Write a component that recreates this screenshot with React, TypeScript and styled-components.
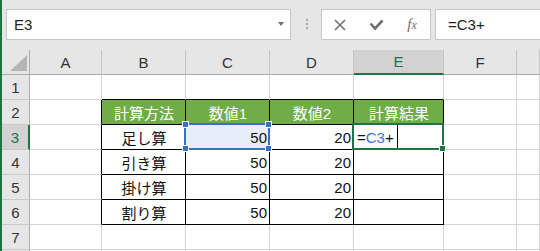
import styled, { createGlobalStyle } from "styled-components";

const GlobalStyle = createGlobalStyle`
  html, body {
    margin: 0;
    padding: 0;
    background: #fff;
  }
  body {
    font-family: "Liberation Sans", "Noto Sans CJK JP", sans-serif;
    overflow: hidden;
  }
`;

const EXCEL_GREEN = "#217346";
const REF_BLUE = "#3a6ec7";

const Frame = styled.div`
  display: flex;
  width: 540px;
  height: 251px;
  overflow: hidden;
`;

const Strip = styled.div`
  width: 2px;
  flex: none;
  background: ${EXCEL_GREEN};
`;

const Main = styled.div`
  flex: 1;
  min-width: 0;
  display: flex;
  flex-direction: column;
`;

const Toolbar = styled.div`
  height: 50px;
  flex: none;
  display: flex;
  align-items: flex-start;
  padding: 9px 0 0 4px;
  box-sizing: border-box;
  background: #e6e6e6;
`;

const Box = styled.div`
  height: 31px;
  box-sizing: border-box;
  border: 1px solid #c6c6c6;
  background: #fff;
  display: flex;
  align-items: center;
  flex: none;
`;

const NameBox = styled(Box)`
  width: 285px;
  justify-content: space-between;
  padding: 0 6px 0 7px;
  font-size: 15px;
  color: #222;
`;

const DropArrow = styled.span`
  width: 0;
  height: 0;
  margin-top: -2px;
  border-left: 3.5px solid transparent;
  border-right: 3.5px solid transparent;
  border-top: 4px solid #6d6d6d;
`;

const Grip = styled.div`
  margin: 10px 0 0 15px;
  display: flex;
  flex-direction: column;
  gap: 2px;
`;

const GripDot = styled.span`
  width: 2px;
  height: 2px;
  background: #a8a8a8;
`;

const FxBox = styled(Box)`
  margin-left: 13px;
  width: 110px;
  display: grid;
  grid-template-columns: repeat(3, 36px);
  align-items: center;
  justify-items: center;
`;

const FxLabel = styled.span`
  font-family: "Liberation Serif", serif;
  font-style: italic;
  color: #6e6e6e;
  font-size: 15px;
  line-height: 1;
  & > small {
    font-size: 12px;
  }
`;

const FormulaBox = styled(Box)`
  flex: 1;
  margin-left: 4px;
  border-right: none;
  padding-left: 12px;
  font-size: 15px;
  color: #222;
`;

const Sheet = styled.div`
  flex: 1;
  display: grid;
  grid-template-columns: 28px 72px 84px 84px 84px 90px 73px 1fr;
  grid-auto-rows: 25px;
  overflow: hidden;
  font-size: 15px;
`;

const Corner = styled.div`
  box-sizing: border-box;
  background: #e6e6e6;
  border-right: 1px solid #ababab;
  border-bottom: 1px solid #ababab;
  display: flex;
  align-items: flex-end;
  justify-content: flex-end;
  padding: 0 2px 3px 0;
`;

const CornerMark = styled.span`
  width: 0;
  height: 0;
  border-left: 17px solid transparent;
  border-bottom: 16px solid #b4b4b4;
`;

const ColHeader = styled.div<{ $active?: boolean }>`
  box-sizing: border-box;
  background: ${(p) => (p.$active ? "#d2d2d2" : "#e6e6e6")};
  color: ${(p) => (p.$active ? EXCEL_GREEN : "#333")};
  border-right: 1px solid #c4c4c4;
  border-bottom: ${(p) => (p.$active ? `2px solid ${EXCEL_GREEN}` : "1px solid #ababab")};
  display: flex;
  align-items: center;
  justify-content: center;
`;

const RowHeader = styled.div<{ $active?: boolean }>`
  box-sizing: border-box;
  background: ${(p) => (p.$active ? "#d2d2d2" : "#e6e6e6")};
  color: ${(p) => (p.$active ? EXCEL_GREEN : "#333")};
  border-right: ${(p) => (p.$active ? `2px solid ${EXCEL_GREEN}` : "1px solid #ababab")};
  border-bottom: 1px solid #c8c8c8;
  display: flex;
  align-items: center;
  justify-content: center;
`;

const Cell = styled.div<{
  $rb?: boolean;
  $bb?: boolean;
  $head?: boolean;
  $fill?: string;
  $align?: "left" | "center" | "right";
}>`
  position: relative;
  box-sizing: border-box;
  border-right: 1px solid ${(p) => (p.$rb ? "#000" : "#d4d4d4")};
  border-bottom: 1px solid ${(p) => (p.$bb ? "#000" : "#d4d4d4")};
  background: ${(p) => (p.$head ? "#70ad47" : p.$fill || "#fff")};
  color: ${(p) => (p.$head ? "#fff" : "#111")};
  display: flex;
  align-items: center;
  justify-content: ${(p) =>
    p.$align === "right" ? "flex-end" : p.$align === "left" ? "flex-start" : "center"};
  padding: 0 2px 0 3px;
  white-space: nowrap;
`;

const Outline = styled.div<{ $color: string }>`
  position: absolute;
  left: -2px;
  top: -2px;
  right: -1px;
  bottom: -1px;
  border: 2px solid ${(p) => p.$color};
  z-index: 2;
  pointer-events: none;
`;

const Handle = styled.span<{ $color: string; $x: "left" | "right"; $y: "top" | "bottom" }>`
  position: absolute;
  ${(p) => p.$x}: -4px;
  ${(p) => p.$y}: -4px;
  width: 5px;
  height: 5px;
  background: ${(p) => p.$color};
  border: 1px solid #fff;
`;

const RefText = styled.span`
  color: #3f74d0;
`;

const Caret = styled.span`
  align-self: stretch;
  width: 1px;
  margin-left: 3px;
  background: #000;
`;

const columns = ["A", "B", "C", "D", "E", "F", ""];
const headers = ["計算方法", "数値1", "数値2", "計算結果"];
const body = [
  ["足し算", "50", "20"],
  ["引き算", "50", "20"],
  ["掛け算", "50", "20"],
  ["割り算", "50", "20"],
];

const XIcon = () => (
  <svg width="12" height="12" viewBox="0 0 12 12">
    <path d="M1 1 L11 11 M11 1 L1 11" stroke="#707070" strokeWidth="1.6" fill="none" />
  </svg>
);

const CheckIcon = () => (
  <svg width="15" height="12" viewBox="0 0 15 12">
    <path d="M1.5 4.5 L6 9.5 L13.5 1.5" stroke="#707070" strokeWidth="2.6" fill="none" />
  </svg>
);

const renderCell = (row: number, col: number) => {
  const inBand = row >= 2 && row <= 6;
  const rb = inBand && col <= 4;
  const bb = row >= 1 && row <= 6 && col >= 1 && col <= 4;
  const key = `${row}-${col}`;

  if (row === 2 && col >= 1 && col <= 4) {
    return (
      <Cell key={key} $rb $bb $head>
        {headers[col - 1]}
      </Cell>
    );
  }

  if (row >= 3 && row <= 6 && col >= 1 && col <= 3) {
    const value = body[row - 3][col - 1];
    const selected = row === 3 && col === 2;
    return (
      <Cell key={key} $rb $bb $align={col === 1 ? "center" : "right"} $fill={selected ? "#e7eef9" : undefined}>
        {value}
        {selected && (
          <Outline $color={REF_BLUE}>
            <Handle $color={REF_BLUE} $x="left" $y="top" />
            <Handle $color={REF_BLUE} $x="right" $y="top" />
            <Handle $color={REF_BLUE} $x="left" $y="bottom" />
            <Handle $color={REF_BLUE} $x="right" $y="bottom" />
          </Outline>
        )}
      </Cell>
    );
  }

  if (row === 3 && col === 4) {
    return (
      <Cell key={key} $rb $bb $align="left">
        =<RefText>C3</RefText>+
        <Caret />
        <Outline $color={EXCEL_GREEN}>
          <Handle $color={EXCEL_GREEN} $x="right" $y="bottom" />
        </Outline>
      </Cell>
    );
  }

  return <Cell key={key} $rb={rb} $bb={bb} />;
};

const App = () => {
  const rows = [1, 2, 3, 4, 5, 6, 7, 8];
  return (
    <>
      <GlobalStyle />
      <Frame>
        <Strip />
        <Main>
          <Toolbar>
            <NameBox>
              E3
              <DropArrow />
            </NameBox>
            <Grip>
              <GripDot />
              <GripDot />
              <GripDot />
            </Grip>
            <FxBox>
              <XIcon />
              <CheckIcon />
              <FxLabel>
                f<small>x</small>
              </FxLabel>
            </FxBox>
            <FormulaBox>=C3+</FormulaBox>
          </Toolbar>
          <Sheet>
            <Corner>
              <CornerMark />
            </Corner>
            {columns.map((c) => (
              <ColHeader key={c || "G"} $active={c === "E"}>
                {c}
              </ColHeader>
            ))}
            {rows.map((r) => [
              <RowHeader key={`h${r}`} $active={r === 3}>
                {r < 8 ? r : ""}
              </RowHeader>,
              ...columns.map((_, ci) => renderCell(r, ci)),
            ])}
          </Sheet>
        </Main>
      </Frame>
    </>
  );
};

export default App;
